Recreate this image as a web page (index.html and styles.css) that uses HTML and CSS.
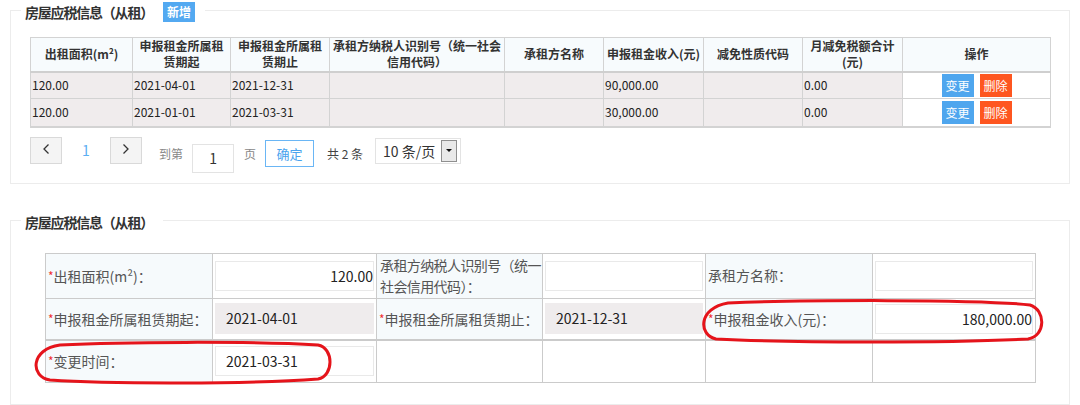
FILE: index.html
```html
<!DOCTYPE html>
<html lang="zh-CN">
<head>
<meta charset="utf-8">
<link rel="stylesheet" href="styles.css">
</head>
<body>
<div class="wrap">
  <section class="panel panel-list">
    <div class="panel-title">
      <span class="title-text">房屋应税信息（从租）</span>
      <span class="btn-add">新增</span>
    </div>
    <table class="grid">
      <colgroup>
        <col class="c102"><col class="c98"><col class="c99"><col class="c175"><col class="c99"><col class="c100"><col class="c99"><col class="c100"><col class="c148">
      </colgroup>
      <thead>
        <tr>
          <th>出租面积(m²)</th>
          <th>申报租金所属租<br>赁期起</th>
          <th>申报租金所属租<br>赁期止</th>
          <th>承租方纳税人识别号（统一社会<br>信用代码）</th>
          <th>承租方名称</th>
          <th>申报租金收入(元)</th>
          <th>减免性质代码</th>
          <th>月减免税额合计<br>(元)</th>
          <th>操作</th>
        </tr>
      </thead>
      <tbody>
        <tr class="r1">
          <td>120.00</td><td>2021-04-01</td><td>2021-12-31</td><td></td><td></td><td>90,000.00</td><td></td><td>0.00</td>
          <td class="ops"><span class="btn-op blue">变更</span><span class="btn-op red">删除</span></td>
        </tr>
        <tr class="r2">
          <td>120.00</td><td>2021-01-01</td><td>2021-03-31</td><td></td><td></td><td>30,000.00</td><td></td><td>0.00</td>
          <td class="ops"><span class="btn-op blue">变更</span><span class="btn-op red">删除</span></td>
        </tr>
      </tbody>
    </table>
    <div class="pager">
      <span class="pg-btn"><svg width="8" height="12" viewBox="0 0 8 12"><polyline points="6.5,1.5 2,6 6.5,10.5" fill="none" stroke="#333" stroke-width="1.3"/></svg></span>
      <span class="pg-num">1</span>
      <span class="pg-btn"><svg width="8" height="12" viewBox="0 0 8 12"><polyline points="1.5,1.5 6,6 1.5,10.5" fill="none" stroke="#333" stroke-width="1.3"/></svg></span>
      <span class="pg-txt pg-goto">到第</span>
      <span class="pg-input">1</span>
      <span class="pg-txt pg-page">页</span>
      <span class="pg-ok">确定</span>
      <span class="pg-total">共 2 条</span>
      <span class="pg-select"><span class="sel-text">10 条/页</span><span class="sel-arrow"></span></span>
    </div>
  </section>

  <section class="panel panel-form">
    <div class="panel-title">
      <span class="title-text">房屋应税信息（从租）</span>
    </div>
    <table class="form">
      <colgroup>
        <col class="f167"><col class="f164"><col class="f166"><col class="f163"><col class="f167"><col class="f163">
      </colgroup>
      <tr class="fr1">
        <td class="lbl"><i>*</i>出租面积(m²)：</td>
        <td class="val"><div class="inp right">120.00</div></td>
        <td class="lbl tight">承租方纳税人识别号（统一<br>社会信用代码）：</td>
        <td class="val"><div class="inp"></div></td>
        <td class="lbl">承租方名称：</td>
        <td class="val"><div class="inp"></div></td>
      </tr>
      <tr class="fr2">
        <td class="lbl"><i>*</i>申报租金所属租赁期起：</td>
        <td class="val"><div class="inp ro">2021-04-01</div></td>
        <td class="lbl"><i>*</i>申报租金所属租赁期止：</td>
        <td class="val"><div class="inp ro">2021-12-31</div></td>
        <td class="lbl"><i>*</i>申报租金收入(元)：</td>
        <td class="val"><div class="inp right">180,000.00</div></td>
      </tr>
      <tr class="fr3">
        <td class="lbl"><i>*</i>变更时间：</td>
        <td class="val"><div class="inp">2021-03-31</div></td>
        <td class="blank"></td>
        <td class="blank"></td>
        <td class="blank"></td>
        <td class="blank"></td>
      </tr>
    </table>
  </section>

  <svg class="marks" width="1080" height="405" viewBox="0 0 1080 405">
    <path d="M60 345 C 120 342, 250 341, 318 345 C 334 348, 334 376, 318 379 C 250 384, 110 384, 50 380 C 30 377, 30 349, 60 345 Z" fill="none" stroke="#e5141b" stroke-width="3"/>
    <path d="M728 303 C 800 300, 980 299, 1030 305 C 1046 310, 1046 336, 1028 339 C 950 343, 790 343, 716 339 C 698 335, 698 308, 728 303 Z" fill="none" stroke="#e5141b" stroke-width="3"/>
  </svg>
</div>
</body>
</html>
```

FILE: styles.css
```css
* { box-sizing: border-box; }
html, body { margin: 0; padding: 0; background: #fff; }
body {
  font-family: "Noto Sans CJK SC", "Noto Sans", "Liberation Sans", sans-serif;
  color: #333;
  width: 1080px;
  height: 405px;
  overflow: hidden;
}
.wrap { position: relative; width: 1080px; height: 405px; padding-top: 10px; }

.panel {
  border: 1px solid #ececec;
  margin: 0 10px;
}
.panel-title {
  display: flex;
  align-items: center;
  height: 20px;
  margin-top: -9px;
  width: max-content;
  background: #fff;
  padding: 0 10px 0 4px;
}
.title-text {
  font-size: 14px;
  font-weight: bold;
  line-height: 20px;
  color: #333;
  letter-spacing: -1.2px;
  white-space: nowrap;
}
.btn-add {
  margin-left: 10px;
  width: 32px;
  height: 20px;
  background: #53a9f1;
  color: #fff;
  font-size: 12px;
  line-height: 20px;
  text-align: center;
  font-weight: bold;
}

/* list table */
.panel-list { padding: 0 19px 9px; }
.panel-list .panel-title { margin-left: -9px; }
.grid {
  margin-top: 15px;
  border-collapse: collapse;
  table-layout: fixed;
  width: 1020px;
}
.c102 { width: 102px; } .c98 { width: 98px; } .c99 { width: 99px; } .c175 { width: 175px; }
.c100 { width: 100px; } .c148 { width: 148px; }
.grid th, .grid td { border: 1px solid #d3d3d3; }
.grid th {
  background: #f7fbfd;
  font-size: 12px;
  font-weight: bold;
  line-height: 16px;
  height: 34px;
  padding: 0 2px;
  color: #333;
  text-align: center;
  border-bottom: 2px solid #cfcfcf;
  white-space: nowrap;
}
.grid td {
  background: #f0eced;
  font-size: 12px;
  line-height: 16px;
  padding: 0 1px;
  color: #222;
  white-space: nowrap;
}
.grid tr.r1 td { height: 27px; }
.grid tr.r2 td { height: 28px; border-bottom: 2px solid #d3d3d3; }
.grid td.ops { background: #fff; text-align: center; padding: 0; }
.btn-op {
  display: inline-block;
  width: 32px;
  height: 23px;
  line-height: 23px;
  font-size: 12px;
  color: #fff;
  vertical-align: middle;
}
.btn-op + .btn-op { margin-left: 6px; }
.btn-op.blue { background: #4fa6ee; }
.btn-op.red { background: #fe5620; }

/* pager */
.pager {
  display: flex;
  align-items: flex-start;
  margin-top: 9px;
  height: 37px;
  font-size: 12px;
  white-space: nowrap;
}
.pager > span { flex-shrink: 0; }
.pg-btn {
  width: 32px;
  height: 27px;
  border: 1px solid #d9d9d9;
  background: #f4f4f4;
  display: flex;
  align-items: center;
  justify-content: center;
}
.pg-btn svg { display: block; margin-top: -2px; }
.pg-num {
  width: 48px;
  text-align: center;
  color: #5aaef2;
  font-size: 14px;
  line-height: 27px;
}
.pg-txt { color: #888; line-height: 27px; margin-top: 3px; }
.pg-goto { margin-left: 17px; }
.pg-input {
  margin-left: 9px;
  margin-top: 7px;
  width: 42px;
  height: 29px;
  border: 1px solid #e3e3e3;
  text-align: center;
  font-size: 14px;
  line-height: 27px;
  color: #333;
}
.pg-page { margin-left: 10px; }
.pg-ok {
  margin-left: 9px;
  margin-top: 3px;
  width: 49px;
  height: 27px;
  border: 1px solid #6ab6f5;
  color: #4aa3ee;
  font-size: 13px;
  line-height: 25px;
  text-align: center;
}
.pg-total { margin-left: 13px; margin-top: 3px; line-height: 27px; color: #444; font-size: 12px; }
.pg-select {
  margin-left: 12px;
  margin-top: 1px;
  width: 86px;
  height: 26px;
  border: 1px solid #e3e3e3;
  display: flex;
  align-items: center;
  justify-content: space-between;
  padding: 0 3px 0 7px;
}
.sel-text { font-size: 14px; color: #333; line-height: 24px; }
.sel-arrow {
  position: relative;
  width: 16px;
  height: 22px;
  background: #e9e9e9;
  border: 1px solid #8f8f8f;
}
.sel-arrow::after {
  content: "";
  position: absolute;
  left: 4px;
  top: 8px;
  border-left: 3px solid transparent;
  border-right: 3px solid transparent;
  border-top: 3px solid #111;
}

/* form panel */
.panel-form {
  margin-top: 36px;
  padding: 0 34px 19px;
  height: 185px;
}
.panel-form .panel-title { margin-left: -24px; }
.form {
  margin-top: 21px;
  border-collapse: collapse;
  table-layout: fixed;
  width: 990px;
}
.f167 { width: 167px; } .f164 { width: 164px; } .f166 { width: 166px; } .f163 { width: 163px; }
.form td { border: 1px solid #cbcbcb; padding: 0; }
.form tr.fr1 td { height: 45px; }
.form tr.fr2 td { height: 42px; border-bottom: 2px solid #cbcbcb; }
.form tr.fr3 td { height: 42px; }
.form td.lbl {
  background: #f6fafc;
  color: #555;
  font-size: 14px;
  line-height: 21px;
  padding-left: 2px;
  white-space: nowrap;
  overflow: hidden;
}
.form td.lbl.tight { letter-spacing: -0.6px; padding-left: 3px; }
.form td.lbl i {
  font-style: normal;
  color: #f03030;
  font-size: 12px;
  vertical-align: 1px;
}
.form td.val { padding: 0 2px; background: #fff; }
.form td.blank { background: #fff; }
.inp {
  height: 30px;
  border: 1px solid #e9e9e9;
  background: #fff;
  font-size: 14px;
  line-height: 28px;
  color: #222;
  padding: 0 10px;
}
.inp.right { text-align: right; padding-right: 0; }
.inp.ro { background: #efeced; border-color: #efeced; height: 31px; }

.marks { position: absolute; left: 0; top: 0; pointer-events: none; }
```
